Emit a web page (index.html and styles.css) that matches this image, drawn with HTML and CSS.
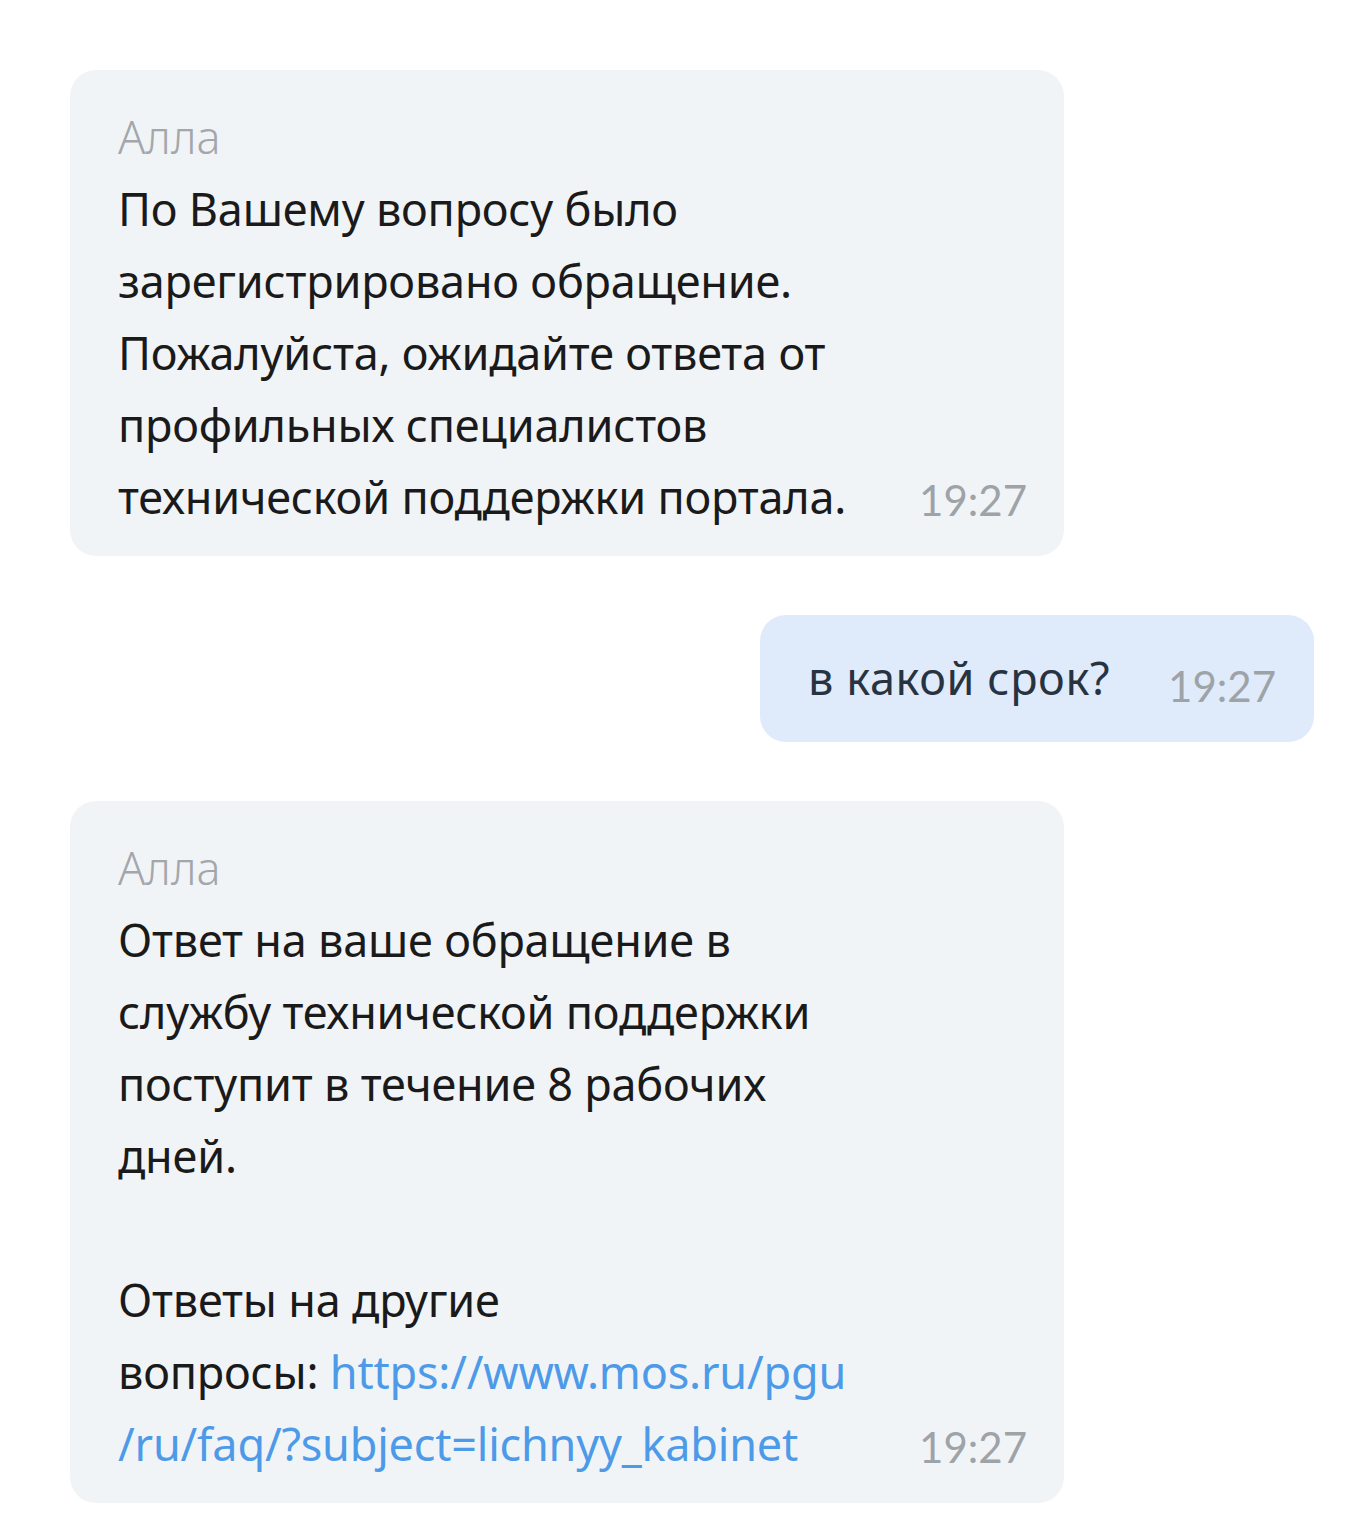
FILE: index.html
```html
<!DOCTYPE html>
<html lang="ru">
<head>
<meta charset="utf-8">
<link rel="stylesheet" href="styles.css">
</head>
<body>
<div class="chat">
  <div class="msg msg-in">
    <div class="body">
      <div class="name">Алла</div>
      <div class="text">По Вашему вопросу было<br>зарегистрировано обращение.<br>Пожалуйста, ожидайте ответа от<br>профильных специалистов<br>технической поддержки портала.</div>
    </div>
    <div class="time">19:27</div>
  </div>
  <div class="msg msg-out">
    <div class="body">
      <div class="text">в какой срок?</div>
    </div>
    <div class="time">19:27</div>
  </div>
  <div class="msg msg-in">
    <div class="body">
      <div class="name">Алла</div>
      <div class="text">Ответ на ваше обращение в<br>службу технической поддержки<br>поступит в течение 8 рабочих<br>дней.<br><br>Ответы на другие<br>вопросы: <a class="link" href="#">https://www.mos.ru/pgu<br>/ru/faq/?subject=lichnyy_kabinet</a></div>
    </div>
    <div class="time">19:27</div>
  </div>
</div>
</body>
</html>
```
FILE: styles.css
```css
html, body {
  margin: 0;
  padding: 0;
  background: #ffffff;
}
.chat {
  display: flex;
  flex-direction: column;
  gap: 59px;
  padding: 70px 46px 19px 70px;
  font-family: "Noto Sans", "Open Sans", sans-serif;
}
.msg {
  display: flex;
  align-items: flex-end;
  border-radius: 26px;
  box-sizing: border-box;
}
.msg-in {
  width: 994px;
  background: #f1f4f7;
  padding: 31px 37px 23px 48px;
  align-self: flex-start;
}
.msg-out {
  align-self: flex-end;
  background: #dfeafa;
  padding: 27px 38px 28px 48px;
  gap: 58px;
}
.msg-in .body {
  flex: 1;
}
.name {
  font-size: 45px;
  line-height: 72px;
  font-weight: 300;
  color: #a3a7ab;
}
.text {
  font-size: 45px;
  line-height: 72px;
  color: #1a1a1a;
  letter-spacing: -0.2px;
}
.msg-out .text {
  color: #283342;
  letter-spacing: 0.6px;
}
.link {
  color: #4d9ae8;
  text-decoration: none;
}
.time {
  font-family: "Lato", sans-serif;
  font-size: 42px;
  line-height: 72px;
  color: #9ea3a8;
  font-weight: 400;
  position: relative;
  top: 3px;
}
.msg-out .time {
  top: 8px;
}
```
